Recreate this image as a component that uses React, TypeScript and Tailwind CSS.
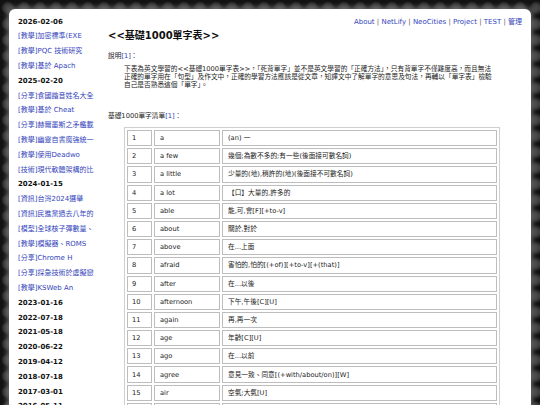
import React from 'react';

type SideItem = { date?: string; link?: string };

const sideItems: SideItem[] = [
  { date: '2026-02-06' },
  { link: '[教學]加密標準(EXE' },
  { link: '[教學]PQC 技術研究' },
  { link: '[教學]基於 Apach' },
  { date: '2025-02-20' },
  { link: '[分享]食國諧音姓名大全' },
  { link: '[教學]基於 Cheat' },
  { link: '[分享]赫爾墨斯之矛艦載' },
  { link: '[教學]幽靈自書魔強統一' },
  { link: '[教學]使用Deadwo' },
  { link: '[技術]現代軟體架構的比' },
  { date: '2024-01-15' },
  { link: '[資訊]台灣2024選舉' },
  { link: '[資訊]民進黨過去八年的' },
  { link: '[模型]全球核子彈數量、' },
  { link: '[教學]模擬器、ROMS' },
  { link: '[分享]Chrome H' },
  { link: '[分享]採急技術於虛擬戀' },
  { link: '[教學]KSWeb An' },
  { date: '2023-01-16' },
  { date: '2022-07-18' },
  { date: '2021-05-18' },
  { date: '2020-06-22' },
  { date: '2019-04-12' },
  { date: '2018-07-18' },
  { date: '2017-03-01' },
  { date: '2016-05-11' },
];

const words: [string, string, string][] = [
  ['1', 'a', '(an) 一'],
  ['2', 'a few', '幾個;為數不多的;有一些(後面接可數名詞)'],
  ['3', 'a little', '少量的(地),稍許的(地)(後面接不可數名詞)'],
  ['4', 'a lot', '【口】大量的,許多的'],
  ['5', 'able', '能,可,會[F][+to-v]'],
  ['6', 'about', '關於,對於'],
  ['7', 'above', '在...上面'],
  ['8', 'afraid', '害怕的,怕的[(+of)][+to-v][+(that)]'],
  ['9', 'after', '在...以後'],
  ['10', 'afternoon', '下午,午後[C][U]'],
  ['11', 'again', '再,再一次'],
  ['12', 'age', '年齡[C][U]'],
  ['13', 'ago', '在...以前'],
  ['14', 'agree', '意見一致、同意[(+with/about/on)][W]'],
  ['15', 'air', '空氣;大氣[U]'],
  ['16', 'all', '全部的,所有的'],
];

const navLinks = ['About', 'NetLify', 'NeoCities', 'Project', 'TEST', '管理'];

export default function App() {
  return (
    <div className="h-[405px] overflow-hidden bg-[#121212] bg-[radial-gradient(circle,#4a4a4a_0,#3a3a3a_4px,transparent_7px)] bg-[length:16px_16px] pt-[9px] px-[9px] font-['DejaVu_Sans','Noto_Sans_CJK_TC',sans-serif]">
      <div className="flex h-[420px] bg-white rounded-t-[6px] shadow-[0_0_5px_2px_rgba(110,110,110,0.9)] pl-[9px] pr-[9px]">
        {/* Sidebar */}
        <aside className="w-[87px] shrink-0 pt-[5.6px] overflow-hidden">
          {sideItems.map((item, i) =>
            item.date ? (
              <div key={i} className="h-[14.8px] leading-[14.8px] text-[7px] font-bold text-[#111] whitespace-nowrap">
                {item.date}
              </div>
            ) : (
              <div key={i} className="h-[14.8px] leading-[14.8px] text-[7px] text-[#3344bb] whitespace-nowrap overflow-hidden">
                {item.link}
              </div>
            )
          )}
        </aside>

        {/* Main content */}
        <main className="flex-1 ml-[3px] text-[#222]">
          <div className="mt-[8px] h-[10px] leading-[10px] text-[7px] text-right whitespace-nowrap">
            {navLinks.map((l, i) => (
              <span key={l}>
                <span className="text-[#3344bb]">{l}</span>
                {i < navLinks.length - 1 && <span className="text-[#666]"> | </span>}
              </span>
            ))}
          </div>

          <h1 className="mt-[3px] h-[12px] leading-[12px] text-[10px] font-bold text-[#111]">
            &lt;&lt;基礎1000單字表&gt;&gt;
          </h1>

          <div className="mt-[10px] h-[8px] leading-[8px] text-[6.7px]">
            說明<span className="text-[#3344bb]">[1]</span>：
          </div>

          <p className="mt-[5px] pl-[16px] leading-[8px] text-[6.7px] whitespace-nowrap">
            下表為英文學習的&lt;&lt;基礎1000單字表&gt;&gt;，「死背單字」並不是英文學習的「正確方法」，只有背單字不僅難度高，而且無法
            <br />
            正確的單字用在「句型」及作文中，正確的學習方法應該是從文章，知譯文中了解單字的意思及句法，再輔以「單字表」檢驗
            <br />
            自己是否熟悉這個「單字」。
          </p>

          <div className="mt-[23px] h-[8px] leading-[8px] text-[6.7px]">
            基礎1000單字清單<span className="text-[#3344bb]">[1]</span>：
          </div>

          <table className="mt-[7px] ml-[16px] w-[376px] border-separate border-spacing-[2px] border border-[#cfcfcf] text-[6.7px] text-[#222]">
            <tbody>
              {words.map(([n, w, m]) => (
                <tr key={n}>
                  <td className="w-[25px] h-[16.2px] border border-[#bdbdbd] pl-[4px] align-middle">{n}</td>
                  <td className="w-[66px] h-[16.2px] border border-[#bdbdbd] pl-[5px] align-middle whitespace-nowrap">{w}</td>
                  <td className="h-[16.2px] border border-[#bdbdbd] pl-[5px] align-middle whitespace-nowrap">{m}</td>
                </tr>
              ))}
            </tbody>
          </table>
        </main>
      </div>
    </div>
  );
}
